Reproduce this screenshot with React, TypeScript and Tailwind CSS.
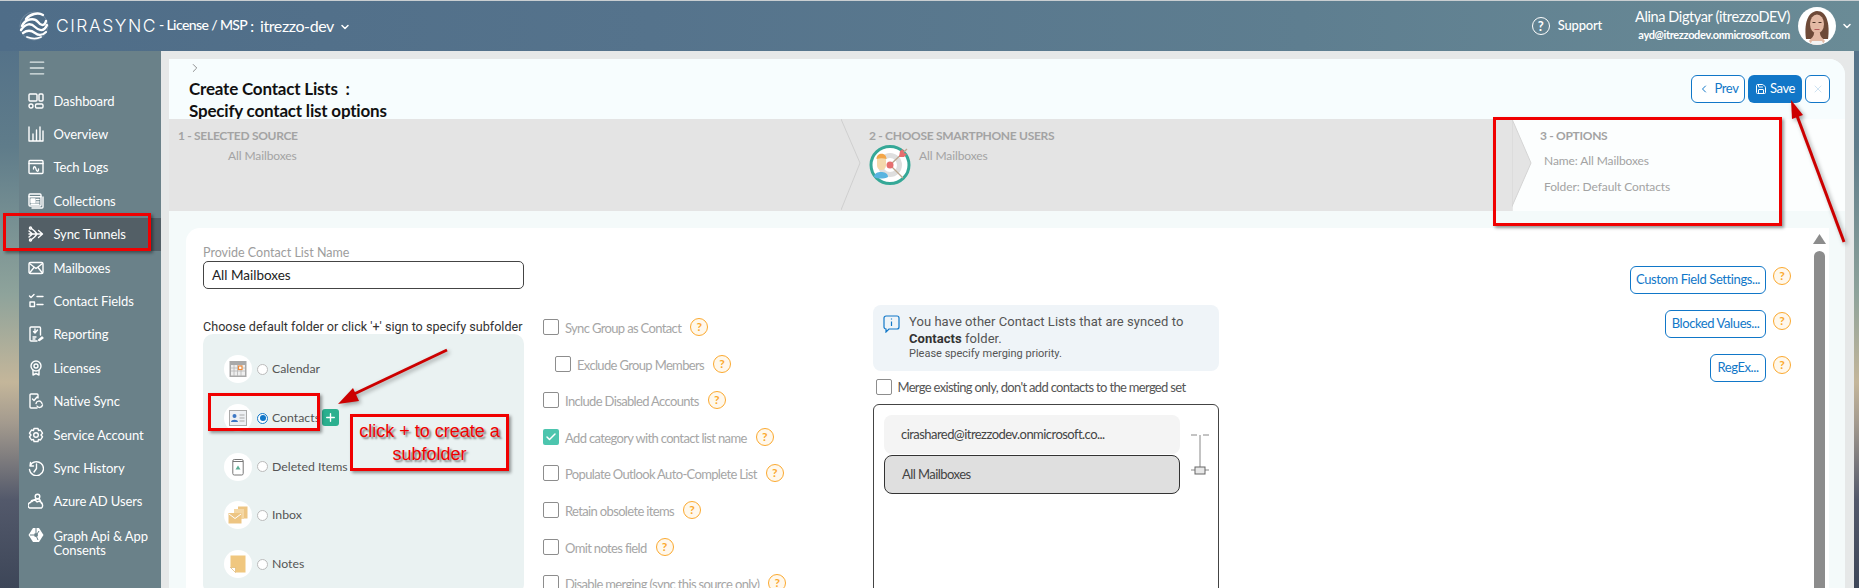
import { ChevronDown, ChevronLeft, ChevronRight, Plus, Save, X, Check, Menu } from 'lucide-react';
import type { ReactNode } from 'react';

const sw = { fill: 'none', stroke: 'currentColor', strokeWidth: 1.4, strokeLinecap: 'round', strokeLinejoin: 'round' } as const;

function NavSvg({ children }: { children: ReactNode }) {
  return (
    <svg viewBox="0 0 16 16" className="w-4 h-4 shrink-0" {...sw}>
      {children}
    </svg>
  );
}

const navItems: { label: ReactNode; icon: ReactNode; active?: boolean; tall?: boolean }[] = [
  { label: 'Dashboard', icon: <NavSvg><rect x="1" y="1" width="8" height="7" rx="1" /><rect x="11" y="1" width="4" height="7" rx="1" /><rect x="1" y="11" width="4" height="4" rx="2" /><rect x="7.5" y="11" width="7.5" height="4" rx="1.2" /></NavSvg> },
  { label: 'Overview', icon: <NavSvg><path d="M1 1v14h14M5 15V8M8.500 15V4M12 15V1M15 15V5" /></NavSvg> },
  { label: 'Tech Logs', icon: <NavSvg><rect x="1" y="1.500" width="14" height="13" rx="1" /><path d="M1 4.500h14M5.500 10c0-3 2-3 2.500 0s2.500 3 2.500 0" /></NavSvg> },
  { label: 'Collections', icon: <NavSvg><rect x="1" y="1" width="12" height="12" rx="1" /><path d="M15 4v10a1 1 0 0 1-1 1H4M1 3.800h12" /><rect x="3" y="6" width="4" height="3.500" fill="currentColor" /><path d="M8.500 6.500H11M8.500 9H11M3 11.200h8" /></NavSvg> },
  { label: 'Sync Tunnels', active: true, icon: <NavSvg><path d="M1 8h13M10.500 4.500 14.500 8l-4 3.500M3.500 2.500l3 2.500L9 8l-2.500 3-3 2.500M1 5l3.500 3L1 11" /><circle cx="2.500" cy="2" r="1" /><circle cx="2.500" cy="14" r="1" /></NavSvg> },
  { label: 'Mailboxes', icon: <NavSvg><rect x="1" y="2.500" width="14" height="11" rx="1.500" /><path d="m1.500 3.500 6.500 5 6.500-5M1.500 13l4.500-5.500M14.500 13 10 7.500" /></NavSvg> },
  { label: 'Contact Fields', icon: <NavSvg><path d="m1.500 3 1.500 1.500L6 1.500M9 3.500h6M9 11.500h6" /><rect x="2" y="9" width="4.500" height="4.500" /></NavSvg> },
  { label: 'Reporting', icon: <NavSvg><path d="M12.500 9V2a1 1 0 0 0-1-1H3a1 1 0 0 0-1 1v12a1 1 0 0 0 1 1h6M5 11h3M5 13h2M7 3v3.500M5.500 5.500 7 7l2.500-3" /><path d="m10.500 14 3.500-3 1 1-3.500 2.500z" /></NavSvg> },
  { label: 'Licenses', icon: <NavSvg><circle cx="8" cy="6" r="5" /><circle cx="8" cy="6" r="2" /><path d="M5 10.500V15l3-1.500 3 1.500v-4.500" /></NavSvg> },
  { label: 'Native Sync', icon: <NavSvg><path d="M10 5V2a1 1 0 0 0-1-1H3a1 1 0 0 0-1 1v12a1 1 0 0 0 1 1h6M4.500 6 6 7.500 9 4M8 10.500a3 3 0 0 1 5.500-1l.5 1M14.500 12a3 3 0 0 1-5.500 1" /></NavSvg> },
  { label: 'Service Account', icon: <NavSvg><path d="M6 1.500h4l.5 2 2-.5 2 3.200-1.500 1.800 1.500 1.800-2 3.200-2-.5-.5 2H6l-.5-2-2 .5-2-3.200L3 8 1.500 6.200l2-3.200 2 .5z" /><circle cx="8" cy="8" r="2.300" /></NavSvg> },
  { label: 'Sync History', icon: <NavSvg><path d="M2.500 2.500 2 6h3.500M2 6a7 7 0 1 1-.5 3.500M8.500 4v4.500L6 12" /></NavSvg> },
  { label: 'Azure AD Users', icon: <NavSvg><circle cx="9.500" cy="3.500" r="2.300" /><path d="M4 8.500 7.500 6h4l2 4.500M1.500 15a3 3 0 0 1 1-5.500 3.500 3.500 0 0 1 6.500-.5 3.500 3.500 0 0 1 5.500 3 3 3 0 0 1-1 3z" /></NavSvg> },
  { label: <>Graph Api & App<br />Consents</>, tall: true, icon: <svg viewBox="0 0 16 16" className="w-4 h-4 shrink-0 -mt-[16px]"><path d="M5 1h6l4.500 7-4.500 7H5L.5 8z" fill="currentColor" /><circle cx="8" cy="8" r="2" fill="#6a8189" /><path d="M8 1v5M2 8h4M11 4 9 7M10 13 8.500 9.500" stroke="#6a8189" strokeWidth="1" /></svg> },
];

function Help() {
  return (
    <span className="w-[18px] h-[18px] shrink-0 rounded-full border-[1.5px] border-[#fba92f] bg-[#fff8ec] text-[#fba92f] text-[12px] font-bold tracking-normal leading-none flex items-center justify-center">?</span>
  );
}

function Check16({ checked }: { checked?: boolean }) {
  return checked ? (
    <span className="w-4 h-4 shrink-0 rounded-[2px] bg-[#4cc5ae] flex items-center justify-center text-white"><Check size={12} strokeWidth={3} /></span>
  ) : (
    <span className="w-4 h-4 shrink-0 rounded-[2px] border border-[#8d8d8d] bg-white" />
  );
}

const options: { label: string; checked?: boolean; indent?: boolean }[] = [
  { label: 'Sync Group as Contact' },
  { label: 'Exclude Group Members', indent: true },
  { label: 'Include Disabled Accounts' },
  { label: 'Add category with contact list name', checked: true },
  { label: 'Populate Outlook Auto-Complete List' },
  { label: 'Retain obsolete items' },
  { label: 'Omit notes field' },
  { label: 'Disable merging (sync this source only)' },
];

const folderIcons: Record<string, ReactNode> = {
  Calendar: (
    <svg viewBox="0 0 18 18" className="w-[18px] h-[18px]">
      <rect x="0.500" y="1" width="17" height="16" fill="#a9a9a9" />
      <rect x="2" y="5" width="14" height="10.500" fill="#eee" />
      <path d="M2 8h14M2 11h14M5 5v11M8.500 5v11M12 5v11" stroke="#b5b5b5" strokeWidth="0.800" />
      <rect x="9.500" y="6" width="3.500" height="3.500" fill="#fff" stroke="#ee8a3a" strokeWidth="1.200" />
    </svg>
  ),
  Contacts: (
    <svg viewBox="0 0 18 16" className="w-[18px] h-4">
      <rect x="0.500" y="0.500" width="17" height="15" fill="#eef0f3" stroke="#aaa" />
      <circle cx="5.500" cy="6" r="2" fill="#3d77c4" />
      <path d="M2 12c0-3 7-3 7 0z" fill="#3d77c4" />
      <path d="M10.500 5h5M10.500 8h5M10.500 11h5" stroke="#aaa" />
    </svg>
  ),
  'Deleted Items': (
    <svg viewBox="0 0 12 18" className="w-3 h-[18px]">
      <rect x="0.800" y="1.500" width="10.400" height="15.500" rx="1.500" fill="#fff" stroke="#777" />
      <path d="M1 3.500h10" stroke="#777" />
      <path d="m6 7.500 2.500 4h-5z" fill="#5cae96" />
    </svg>
  ),
  Inbox: (
    <svg viewBox="0 0 20 18" className="w-5 h-[18px]">
      <rect x="10" y="0.500" width="9.500" height="12" fill="#edc583" />
      <rect x="6" y="3" width="10" height="10" fill="#f4d7a4" />
      <rect x="0.500" y="7" width="13" height="10.500" fill="#edc583" />
      <path d="m1 8 6 4.500L13 8" stroke="#fff" fill="none" />
    </svg>
  ),
  Notes: (
    <svg viewBox="0 0 16 18" className="w-4 h-[18px]">
      <path d="M0.500 0.500h15v17H5.500l-5-5z" fill="#f0c77f" />
      <path d="M0.500 12.500h5v5z" fill="#fff" stroke="#d8b06a" strokeWidth="0.600" />
    </svg>
  ),
};

const folders = ['Calendar', 'Contacts', 'Deleted Items', 'Inbox', 'Notes'];

function OutlineButton({ children, className }: { children: ReactNode; className?: string }) {
  return (
    <button className={`h-7 rounded-[6px] border border-[#1177c8] bg-white text-[#1177c8] text-[13px] tracking-[-0.4px] flex items-center justify-center ${className ?? ''}`}>
      {children}
    </button>
  );
}

function Logo() {
  return (
    <svg viewBox="0 0 30 30" className="w-[30px] h-[30px] shrink-0" fill="none" stroke="white" strokeLinecap="round">
      <circle cx="15" cy="15" r="14" stroke="#ffffff" strokeOpacity="0.300" strokeWidth="0.600" />
      <path d="M7 8C11 3 19 1 24 4" strokeWidth="2.400" />
      <path d="M3 15C6 8 15 6 19 11 23 16 26 14 27 10" strokeWidth="2.400" />
      <path d="M2 19c5-7 10-7 14-3s9 5 12-2" strokeWidth="2.400" />
      <path d="M4 22c4-3 8-3 12 0s8 2 11-1" strokeWidth="2.200" />
      <path d="M8 26c5 2 10 2 14 0" strokeWidth="1.800" />
    </svg>
  );
}

function Avatar() {
  return (
    <svg viewBox="0 0 38 38" className="w-[38px] h-[38px] shrink-0 rounded-full bg-white">
      <path d="M8 32C6 18 9 5 19 4c10 0 13 13 11 28z" fill="#6e4a38" />
      <ellipse cx="19" cy="17" rx="7" ry="9.500" fill="#e3b9a4" />
      <path d="M11 34c2-3 5-4 5-8h6c0 4 3 5 5 8l-3 4H14z" fill="#e3b9a4" />
      <path d="M14 34h10l2 4H12z" fill="#f3f3f3" />
      <path d="M14.500 15.500h3M20.500 15.500h3" stroke="#4a3328" strokeWidth="1" />
      <path d="M16.500 22.500h5" stroke="#b65d5d" strokeWidth="1.200" />
    </svg>
  );
}

function TargetIcon() {
  return (
    <svg viewBox="0 0 42 41" className="w-[42px] h-[41px] shrink-0">
      <ellipse cx="21" cy="21" rx="19" ry="18.500" fill="#fff" stroke="#35a897" strokeWidth="3" />
      <circle cx="21" cy="21" r="12" fill="#dedede" />
      <circle cx="21" cy="21" r="7" fill="#fff" />
      <path d="M5 33c0-4 4-5 7-5s7 1 7 5c-4 2-10 2-14 0z" fill="#58b4e0" />
      <rect x="8" y="11" width="9" height="15" rx="4.500" fill="#f4d8ab" />
      <path d="M7.500 15c0-7 10-7 10 0-3-1-7-1-10 0z" fill="#f3a648" />
      <path d="M21 21 38 5M21 21l13 13" stroke="#bda78f" strokeWidth="1.300" />
      <circle cx="21" cy="21" r="3.500" fill="#e66f6f" />
      <path d="m30 13 1-6 3-2 1 4 3 1-3 3z" fill="#e66f6f" />
    </svg>
  );
}

export default function App() {
  return (
    <div className="relative w-[1859px] h-[588px] overflow-hidden flex flex-col font-[Lato,sans-serif] bg-[linear-gradient(180deg,#4f6d88_0%,#5f7c8a_25%,#8ea39b_50%,#c4b69a_65%,#a39a8e_72%,#53596b_85%,#3d4658_100%)]">
      {/* top bar */}
      <header className="h-[51px] shrink-0 border-t border-[#c9ced1] bg-[linear-gradient(90deg,#4f6d88_0%,#55738c_35%,#5e7e90_70%,#6a8b96_100%)] text-white flex items-center pl-[19px] pr-[6px]">
        <Logo />
        <span className="ml-[7px] text-[17.5px] tracking-[1.5px] font-[Inter,sans-serif] font-light">CIRASYNC</span>
        <span className="ml-[2px] -mt-[3px] text-[14px] tracking-[-0.6px] font-medium">- License / MSP</span>
        <span className="ml-[3px] text-[15px] font-medium">:</span>
        <span className="ml-[6px] text-[16px] tracking-[-0.4px]">itrezzo-dev</span>
        <ChevronDown size={12} strokeWidth={3} className="ml-[5px] mt-[2px]" />
        <span className="ml-auto w-[18px] h-[18px] rounded-full border-[1.5px] border-white text-[13px] font-bold leading-none flex items-center justify-center">?</span>
        <span className="ml-[8px] text-[13px] font-medium tracking-[-0.2px]">Support</span>
        <div className="ml-[33px] flex flex-col items-end">
          <span className="text-[14.5px] leading-[18px] tracking-[-0.4px]">Alina Digtyar (itrezzoDEV)</span>
          <span className="text-[11px] leading-[18px] font-bold tracking-[-0.35px]">ayd@itrezzodev.onmicrosoft.com</span>
        </div>
        <div className="ml-[8px]"><Avatar /></div>
        <ChevronDown size={12} strokeWidth={3} className="ml-[5px]" />
      </header>

      <div className="flex-1 min-h-0 flex pl-[19px] pr-[5px]">
        {/* side nav */}
        <aside className="w-[142px] shrink-0 bg-[#6a8189] text-white flex flex-col">
          <div className="h-[33px] shrink-0 pl-[8px] flex items-center text-[#dfe7e8]"><Menu size={20} strokeWidth={1.6} /></div>
          {navItems.map((item, i) => (
            <div
              key={i}
              className={`flex items-center gap-[9.5px] pl-[9px] text-[13px] tracking-[-0.1px] leading-[14px] ${item.tall ? 'h-[50px]' : 'h-[33.4px]'} ${item.active ? 'bg-[#535f66]' : ''}`}
            >
              {item.icon}
              <span>{item.label}</span>
            </div>
          ))}
        </aside>

        {/* page */}
        <main className="flex-1 min-w-0 bg-[#e6e8e8] pl-[8px] pr-[9px] pt-[8px]">
          <div className="h-full rounded-tr-[16px] overflow-hidden bg-[#f4fafa] flex flex-col">
            <div className="h-[60px] shrink-0 bg-[#f7fdfe] flex pl-[20px] pr-[15px]">
              <div className="text-[#111] font-bold text-[17px] leading-[21.500px] tracking-[-0.2px]">
                <ChevronRight size={14} strokeWidth={1.4} className="text-[#777] -ml-[1px] mt-[2px]" />
                <div className="mt-[3px]">Create Contact Lists&nbsp; :</div>
                <div>Specify contact list options</div>
              </div>
              <div className="ml-auto pt-[16px] flex gap-[3px]">
                <OutlineButton className="w-[54px] gap-[5px]"><ChevronLeft size={12} strokeWidth={2} />Prev</OutlineButton>
                <button className="w-[54px] h-7 rounded-[6px] bg-[#1177c8] text-white text-[13px] tracking-[-0.4px] flex items-center justify-center gap-[3px]"><Save size={12} />Save</button>
                <OutlineButton className="w-[25px] text-[#cfe3f2]"><X size={12} /></OutlineButton>
              </div>
            </div>

            {/* wizard steps */}
            <div className="h-[92px] shrink-0 flex text-[#a3a3a3] text-[12px] tracking-[-0.1px]">
              <div className="w-[672px] bg-[#e4e4e4] pl-[9px] pt-[10px]">
                <div className="font-bold leading-[14px] tracking-[-0.3px]">1 - SELECTED SOURCE</div>
                <div className="mt-[6px] ml-[50px] leading-[14px]">All Mailboxes</div>
              </div>
              <div className="relative w-[671px] bg-[#e4e4e4] pl-[28px] pt-[10px]">
                <svg viewBox="0 0 20 92" className="absolute left-0 top-0 w-5 h-[92px]" fill="none" stroke="#cfcfcf"><path d="m0 0 19 44L0 91" /></svg>
                <div className="font-bold leading-[14px] tracking-[-0.3px]">2 - CHOOSE SMARTPHONE USERS</div>
                <div className="flex items-start gap-[8px]">
                  <div className="mt-[1px]"><TargetIcon /></div>
                  <span className="mt-[6px] leading-[14px]">All Mailboxes</span>
                </div>
              </div>
              <div className="relative flex-1 bg-[#fcfefe] pl-[28px] pt-[10px]">
                <svg viewBox="0 0 20 92" className="absolute left-0 top-0 w-5 h-[92px]" stroke="#d4d4d4" fill="#e4e4e4"><path d="M0 0 19 44-2 92H0z" /></svg>
                <div className="font-bold leading-[14px] tracking-[-0.3px]">3 - OPTIONS</div>
                <div className="mt-[11px] ml-[4px] leading-[14px]">Name: All Mailboxes</div>
                <div className="mt-[12px] ml-[4px] leading-[14px]">Folder: Default Contacts</div>
              </div>
            </div>

            {/* form */}
            <div className="flex-1 min-h-0 ml-[17px] mr-[16px] mt-[17px] bg-white rounded-tl-[14px] flex overflow-hidden">
              <div className="w-[341px] shrink-0 pl-[17px] pt-[17px]">
                <div className="text-[12.5px] leading-[15px] text-[#9d9d9d]">Provide Contact List Name</div>
                <div className="mt-[1px] h-[28px] w-[321px] rounded-[5px] border border-[#444] pl-[8px] text-[13.500px] text-[#222] flex items-center">All Mailboxes</div>
                <div className="mt-[30px] text-[12.600px] leading-[15px] text-[#333] font-[Roboto,sans-serif] whitespace-nowrap">Choose default folder or click '+' sign to specify subfolder</div>
                <div className="relative w-[321px] h-[260px] rounded-[10px] bg-[#eaf2f2] pl-[21px] pt-[11px] text-[12.300px] text-[#555]">
                  {folders.map((name) => (
                    <div key={name} className="h-[48.7px] flex items-center">
                      <span className="w-7 h-7 rounded-full bg-white flex items-center justify-center shrink-0">{folderIcons[name]}</span>
                      <span className={`ml-[5px] w-[11px] h-[11px] rounded-full bg-white shrink-0 border ${name === 'Contacts' ? 'border-[#1177c8] p-[1.5px]' : 'border-[#bbb]'}`}>
                        {name === 'Contacts' && <span className="block w-full h-full rounded-full bg-[#1177c8]" />}
                      </span>
                      <span className="ml-[4px] whitespace-nowrap">{name}</span>
                      {name === 'Contacts' && (
                        <span className="ml-[2px] w-[17px] h-[17px] rounded-[3px] bg-[#2bb08f] text-white flex items-center justify-center -mt-[1px]"><Plus size={13} strokeWidth={2.5} /></span>
                      )}
                    </div>
                  ))}
                </div>
              </div>

              <div className="w-[330px] shrink-0 ml-[16px] pt-[91px] text-[13px] tracking-[-0.65px] text-[#a6a6a6]">
                {options.map((o) => (
                  <div key={o.label} className={`h-[36.6px] flex items-start gap-[6px] whitespace-nowrap ${o.indent ? 'pl-[12px]' : ''}`}>
                    <Check16 checked={o.checked} />
                    <span className="leading-[18px]">{o.label}</span>
                    <span className="ml-[3px] -mt-[1px]"><Help /></span>
                  </div>
                ))}
              </div>

              <div className="w-[346px] shrink-0 pt-[77px]">
                <div className="h-[66px] rounded-[8px] bg-[#eff4f8] pl-[10px] pt-[8px] flex gap-[9px] text-[#555]">
                  <svg viewBox="0 0 17 18" className="w-[17px] h-[18px] shrink-0 mt-[2px]" fill="none" stroke="#1177c8" strokeWidth="1.200"><path d="M3 1h11a2 2 0 0 1 2 2v9a2 2 0 0 1-2 2H6l-3 3v-3a2 2 0 0 1-2-2V3a2 2 0 0 1 2-2zM8.500 6.500V11M8.500 3.500v1" /></svg>
                  <div className="leading-[17px] font-[Roboto,sans-serif] text-[13px] tracking-[0.05px]">
                    <div>You have other Contact Lists that are synced to</div>
                    <div><b className="text-[#333]">Contacts</b> folder.</div>
                    <div className="text-[11px] tracking-normal leading-[14px]">Please specify merging priority.</div>
                  </div>
                </div>
                <div className="mt-[8px] h-4 pl-[2.500px] flex items-center gap-[6px] text-[13px] tracking-[-0.68px] text-[#555] whitespace-nowrap">
                  <Check16 />
                  <span className="mt-[2px]">Merge existing only, don't add contacts to the merged set</span>
                </div>
                <div className="mt-[9px] h-[220px] rounded-[6px] border border-[#444] pl-[10px] pt-[10px] flex">
                  <div className="w-[296px] shrink-0 text-[13px] tracking-[-0.55px] text-[#444]">
                    <div className="h-[39px] rounded-[8px] bg-[#f4f4f4] pl-[17px] flex items-center">cirashared@itrezzodev.onmicrosoft.co...</div>
                    <div className="mt-[1px] h-[39px] rounded-[8px] bg-[#dfdfdf] border-[1.5px] border-[#333] pl-[17px] flex items-center">All Mailboxes</div>
                  </div>
                  <svg viewBox="0 0 20 42" className="ml-[10px] mt-[19px] w-5 h-[42px] shrink-0" fill="none" stroke="#888"><path d="M10 1v36M1 1h6M13 1h6M1 36h4M15 36h4" /><rect x="5" y="33" width="10" height="7" fill="#e8e8e8" stroke="#666" /></svg>
                </div>
              </div>

              <div className="flex-1 min-w-0 pt-[38px] flex flex-col items-end gap-[16px] pr-[1px]">
                <div className="flex items-center gap-[7px]"><OutlineButton className="w-[136px]">Custom Field Settings...</OutlineButton><span className="-mt-[8px]"><Help /></span></div>
                <div className="flex items-center gap-[7px]"><OutlineButton className="w-[101px]">Blocked Values...</OutlineButton><span className="-mt-[6px]"><Help /></span></div>
                <div className="flex items-center gap-[7px]"><OutlineButton className="w-[56px]">RegEx...</OutlineButton><span className="-mt-[6px]"><Help /></span></div>
              </div>

              <div className="w-[37px] shrink-0 pl-[21px] pt-[6px] flex flex-col items-start">
                <svg viewBox="0 0 13 10" className="w-[13px] h-[10px] shrink-0 fill-[#8c8c8c]"><path d="M6.500 0 13 10H0z" /></svg>
                <div className="mt-[7px] ml-[1px] w-[11px] flex-1 rounded-t-[6px] bg-[#8c8c8c]" />
              </div>
            </div>
          </div>
        </main>
      </div>

      {/* annotations drawn on top of the screenshot */}
      <div className="absolute left-[3px] top-[213px] w-[148px] h-[38px] border-[3px] border-[#f00000] shadow-[2px_2px_3px_rgba(0,0,0,0.4)]" />
      <div className="absolute left-[1493px] top-[117px] w-[289px] h-[109px] border-[3px] border-[#f00000] shadow-[2px_2px_3px_rgba(0,0,0,0.4)]" />
      <div className="absolute left-[208px] top-[393px] w-[112px] h-[38px] border-[3px] border-[#f00000] shadow-[2px_2px_3px_rgba(0,0,0,0.4)]" />
      <div className="absolute left-[350px] top-[414px] w-[159px] h-[57px] border-[3px] border-[#f00000] shadow-[2px_2px_3px_rgba(0,0,0,0.4)] flex items-center justify-center text-center text-[18px] leading-[23px] text-[#f00000] font-['Liberation_Sans',sans-serif] [text-shadow:2px_2px_2px_rgba(0,0,0,0.5)]">
        click + to create a<br />subfolder
      </div>
      <svg className="absolute inset-0 w-[1859px] h-[588px] pointer-events-none drop-shadow-[2px_2px_2px_rgba(0,0,0,0.35)]" viewBox="0 0 1859 588">
        <path d="M447 350 352 395" stroke="#cc0000" strokeWidth="3" />
        <path d="m338 404 15-16 6 13z" fill="#cc0000" />
        <path d="M1844 242 1796 113" stroke="#cc0000" strokeWidth="3" />
        <path d="m1791 100 12 15-11 4z" fill="#cc0000" />
      </svg>
    </div>
  );
}
